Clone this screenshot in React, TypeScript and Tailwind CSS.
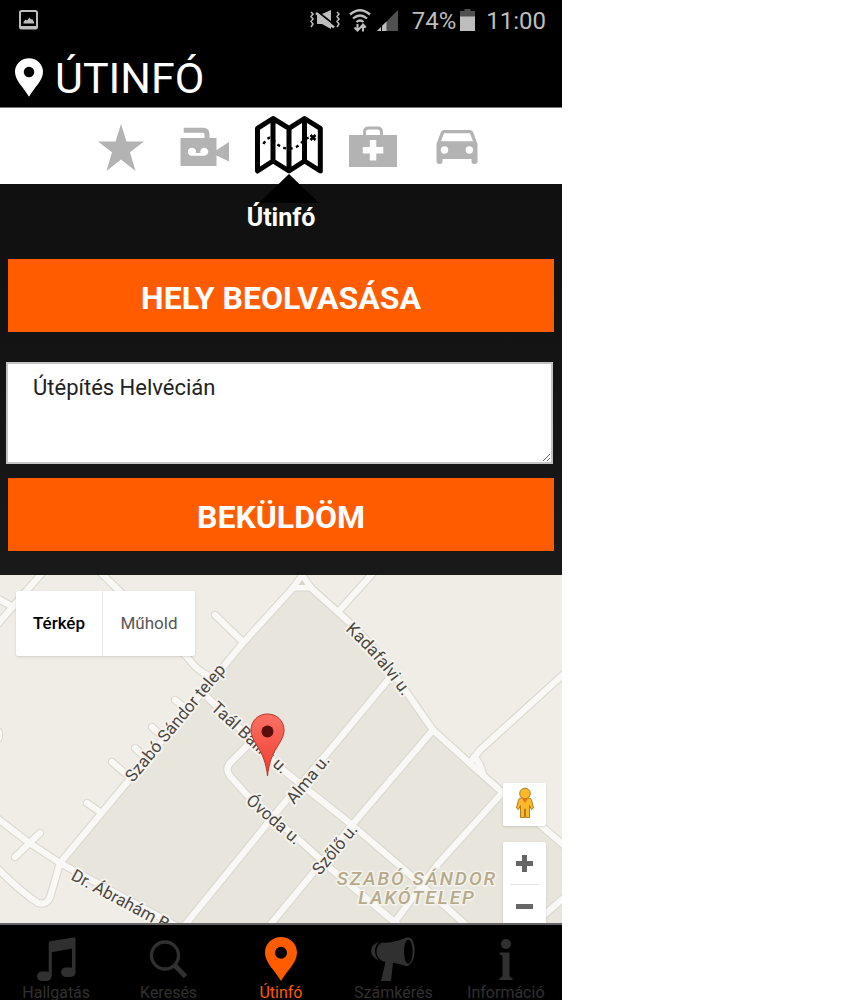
import React, { useState } from 'react';

const gray = '#b3b3b3';

function StarIcon() {
  return (
    <svg width="46" height="47" viewBox="0 0 46 47" aria-hidden="true">
      <path fill={gray} d="M23 0l5.500 17.500H46L32 28.300 37.500 47 23 35.600 8.500 47 14 28.300 0 17.500h17.500z" />
    </svg>
  );
}

function CameraIcon() {
  return (
    <svg width="50" height="40" viewBox="0 0 50 40" aria-hidden="true">
      <path fill="none" stroke={gray} strokeWidth="5" d="M3.700 3.200H23q4 0 4 4V12" />
      <path fill={gray} d="M.500 11h36v12L49 15v19.500L36.500 28.500V39h-36z" />
      <path fill="#fff" d="M12 20.700a4 4 0 0 1 3.800 5.300h4.700a4 4 0 1 1 3.800 2.700H12a4 4 0 0 1 0-8z" />
    </svg>
  );
}

function FoldedMapIcon() {
  return (
    <svg width="68" height="60" viewBox="0 0 68 60" aria-hidden="true" fill="none" stroke="#000">
      <path strokeWidth="5" strokeLinejoin="round" d="M2.500 13.300 18 3.500l16 9.800 15.500-9.800 15.800 9.800V56L49.500 46 34 56 18 46 2.500 56zM18 3.500V46M34 13.300V56M49.500 3.500V46" />
      <path strokeWidth="2.400" strokeDasharray="3 3.500" d="M8.500 29c2-4 5-7 7.500-6s4 5 8 7.500c6 4 13 4 18 1s6-7 12-9" />
      <path strokeWidth="2.600" d="M55.500 20l5 5M60.500 20l-5 5" />
    </svg>
  );
}

function MedkitIcon() {
  return (
    <svg width="48" height="42" viewBox="0 0 48 42" aria-hidden="true">
      <path fill="none" stroke={gray} strokeWidth="3" d="M15.500 10V6q0-4 4-4h9q4 0 4 4v4" />
      <path fill={gray} d="M0 9h48v32H0z" />
      <path fill="#fff" d="M20.800 14h6.500v7h7v6.500h-7v7h-6.500v-7h-7V21h7z" />
    </svg>
  );
}

function CarIcon() {
  return (
    <svg width="42" height="36" viewBox="0 0 42 36" aria-hidden="true">
      <path fill={gray} fillRule="evenodd" d="M8 1h26q2.500 0 3.300 2.500L41.500 15v17.500q0 2.500-3 2.500t-3-2.500V30h-29v2.500q0 2.500-3 2.500t-3-2.500V15L4.700 3.500Q5.500 1 8 1zM8 4.300 5 12.300h32l-3-8z" />
      <circle cx="8.500" cy="21" r="3.700" fill="#fff" />
      <circle cx="33.300" cy="21" r="3.700" fill="#fff" />
    </svg>
  );
}

function PinIcon({ className }: { className: string }) {
  return (
    <svg className={className} viewBox="0 0 32 44" aria-hidden="true">
      <path fill="currentColor" fillRule="evenodd" d="M16 0C7 0 0 7 0 15.500 0 25.500 9.500 33 16 44c6.500-11 16-18.500 16-28.500C32 7 25 0 16 0zm0 9.800a6 6 0 1 1 0 12 6 6 0 0 1 0-12z" />
    </svg>
  );
}

function MusicIcon() {
  return (
    <svg width="39" height="44" viewBox="0 0 39 44" aria-hidden="true" fill="currentColor">
      <path d="M11.700 6q0-1.500 1.500-1.800L36.500.500q2-.3 2 1.500V35.500H35V11.500l-20.200 3.700V39h-3.100z" />
      <rect x="0" y="34.500" width="14.500" height="9.500" rx="4.700" />
      <rect x="24" y="30.500" width="14.500" height="9.500" rx="4.700" />
    </svg>
  );
}

function SearchIcon() {
  return (
    <svg width="39" height="44" viewBox="0 0 39 44" aria-hidden="true" fill="none" stroke="currentColor">
      <circle cx="16" cy="18.500" r="13.500" strokeWidth="3.300" />
      <path strokeWidth="4.800" d="M25.500 28 36.500 39.500" />
    </svg>
  );
}

function MegaphoneIcon() {
  return (
    <svg width="44" height="44" viewBox="0 0 44 44" aria-hidden="true" fill="currentColor">
      <path d="M8 4.500Q0 8 0 14t8 9.500Q4 19 4 14T8 4.500z" />
      <path d="M11 5.500C20 6.500 29 3 35 .800q7-2 8.500 9c1 9-2 18-7.500 19.500-4-.5-8-3-14-3.500L20 44H10l4.500-19-3.500-1q-5.500-3.500-5.500-9.500T11 5.500z" />
      <ellipse cx="37.300" cy="14.800" rx="4.300" ry="12" fill="#000" />
    </svg>
  );
}

function InfoIcon() {
  return (
    <svg width="14" height="44" viewBox="0 0 14 44" aria-hidden="true" fill="currentColor">
      <circle cx="7" cy="7" r="5" />
      <path d="M.500 15.500H10.500V38q0 2.500 3 3v2H.500v-2q3-.5 3-3V20q0-2.500-3-2.500z" />
    </svg>
  );
}

function StatusBar() {
  return (
    <div className="flex h-10 items-center pl-[19px] pr-4 text-[#bdbdbd]">
      <svg width="19" height="20" viewBox="0 0 19 20" aria-hidden="true">
        <rect x="1" y="1" width="17" height="17.500" rx="1.500" fill="none" stroke="currentColor" strokeWidth="2" />
        <path fill="currentColor" d="M1 16h17v3H1zM4.500 13.500V12l2-2.500 1.500 1 2.500-3 1.500 2 1.200-.5 1.800 3v1.500z" />
      </svg>
      <div className="ml-auto flex items-center">
        <svg className="mr-2" width="32" height="22" viewBox="0 0 32 22" aria-hidden="true">
          <path fill="none" stroke="currentColor" strokeWidth="1.500" d="m2 3 2 2-2 2.500 2 2.500-2 2.500L4 15l-2 3M28 3l2 2-2 2.500 2 2.500-2 2.500 2 2.500-2 3" />
          <path fill="currentColor" d="M8 5h5L22 1v19l-9-5H8z" />
          <path stroke="#000" strokeWidth="1.800" d="m9 3 18 14" />
          <path stroke="currentColor" strokeWidth="2.600" d="m7 4 18 14.500" />
        </svg>
        <svg className="mr-[6px]" width="22" height="23" viewBox="0 0 22 23" aria-hidden="true" fill="none" stroke="currentColor">
          <path strokeWidth="2.300" d="M1 5.500Q11-3 21 5.500M4 9.500q7-6 14 0M7.500 13q3.500-3 7 0" />
          <path strokeWidth="2" d="M8.500 15v6.500M5.500 18.500l3 3 3-3M14 22.500V16M11.500 18.500l2.500-3 2.800 3" />
        </svg>
        <svg className="mr-[14px]" width="21" height="21" viewBox="0 0 21 21" aria-hidden="true">
          <path fill="#505050" d="M21 0v21H0z" />
          <path fill="currentColor" d="M9.500 11.500V21H0z" />
          <path stroke="#000" d="M4.500 14v7" />
        </svg>
        <span className="pt-0.5 text-[24px] leading-8">74%</span>
        <svg className="ml-1 mr-[11px]" width="15" height="22" viewBox="0 0 15 22" aria-hidden="true">
          <path fill="#505050" d="M4.500 0h6v2H15v6H0V2h4.500z" />
          <path fill="currentColor" d="M0 7.500h15V22H0z" />
        </svg>
        <span className="pt-0.5 text-[24px] leading-8">11:00</span>
      </div>
    </div>
  );
}

const roads = [
  'M302 576 293 588 243 643 60 863',
  'M303 576 311 588 338 612 Q378 648 403 687 L433 730 475 768 502 792 566 847',
  'M293 587.500H311',
  'M338 612 373 573',
  'M566 672 480 750 470 763M474 757Q480 762 483 774',
  'M388 680 330 750 280 808 185 925',
  'M433 730 352 825 313 873 270 925',
  'M502 793 437 865 394 923',
  'M101 573 187 657Q198 672 211 677M203 693 283 770 352 825 407 872 467 926',
  'M256 737 230 763Q225 769 230 776L247 795 297 838 330 868 398 925',
  'M-3 818 28 842 60 863 180 928',
  'M40 833 15 857',
  'M60 863 51 894Q48 906 38 903Q22 893-3 868',
  'M87 803 100 812M112 762 126 774M135 748 147 759M152 727 165 739M175 700 189 711M215 615 243 642',
  'M42 573-3 625M-3 598 13 607M-2 731Q0 735-2 739',
  'M544 915 566 896',
];

const streetLabels = [
  { id: 'szabo', d: 'M133 783 223 674 260 630', text: 'Szabó Sándor telep' },
  { id: 'kadafalvi', d: 'M345 630 Q374 656 401 694 L420 722', text: 'Kadafalvi u.' },
  { id: 'taal', d: 'M210 709 300 791', text: 'Taál Bálint u.' },
  { id: 'ovoda', d: 'M245 802 320 867', text: 'Óvoda u.' },
  { id: 'alma', d: 'M294 805 350 737', text: 'Alma u.' },
  { id: 'szolo', d: 'M320 876 380 804', text: 'Szőlő u.' },
  { id: 'abraham', d: 'M70 879 230 965', text: 'Dr. Ábrahám B. u.' },
];

function StreetMap() {
  const lines = roads.map((d) => <path key={d} d={d} />);
  return (
    <svg className="absolute inset-0 h-full w-full" viewBox="0 575 562 348" preserveAspectRatio="xMidYMin slice" role="img" aria-label="Térkép">
      <path fill="#f0ede6" d="M-100 475h762v548h-762z" />
      <path fill="#e8e5dc" d="M302 582 338 612Q378 648 403 687L433 730 502 793 566 847V1000H330L60 863 243 643z" />
      <g fill="none" strokeLinecap="round" strokeLinejoin="round">
        <g stroke="#dcd9d0" strokeWidth="8.500">{lines}</g>
        <g stroke="#f9f8f5" strokeWidth="6.200">{lines}</g>
      </g>
      <path fill="#d8d4ca" d="m302 580 3.500 5h-7z" />
      <g className="font-['Roboto',sans-serif] text-[17px]" fill="#4c463e" stroke="#f5f3ee" strokeWidth="4" strokeLinejoin="round" paintOrder="stroke">
        {streetLabels.map((l) => (
          <React.Fragment key={l.id}>
            <path id={l.id} d={l.d} fill="none" stroke="none" />
            <text><textPath href={`#${l.id}`}>{l.text}</textPath></text>
          </React.Fragment>
        ))}
      </g>
      <g className="font-['Roboto',sans-serif] text-[19px] font-medium italic tracking-[2px]" fill="#b5aa8b" stroke="#f5f3ee" strokeWidth="3" paintOrder="stroke" textAnchor="middle">
        <text x="417" y="885">SZABÓ SÁNDOR</text>
        <text x="417" y="904">LAKÓTELEP</text>
      </g>
      <defs>
        <linearGradient id="marker" x1="0" x2="0" y1="0" y2="1">
          <stop offset="0" stopColor="#fb7064" />
          <stop offset="1" stopColor="#ef3c30" />
        </linearGradient>
      </defs>
      <path fill="url(#marker)" stroke="#b8342c" d="M267.500 714c-9.500 0-16.500 7-16.500 16 0 13 14 19 16.500 46 2.500-27 16.500-33 16.500-46 0-9-7-16-16.500-16z" />
      <circle cx="267.500" cy="731.500" r="6" fill="#590e0b" />
    </svg>
  );
}

function PegmanIcon() {
  return (
    <svg width="18" height="32" viewBox="0 0 18 32" aria-hidden="true" fill="#fbb829" stroke="#b27d1d" strokeWidth="1">
      <path d="M5 11h8q2 0 2.500 2L17.500 21l-2 1.500-2-4V30.500h-4V22h-1v8.500h-4v-12l-2 4-2-1.500L2.500 13Q3 11 5 11z" />
      <circle cx="9" cy="6.500" r="5.300" />
      <path fill="#e5751f" stroke="none" d="M6 11.500h6L9 16z" />
    </svg>
  );
}

const tabs = [
  { name: 'Kedvencek', icon: <StarIcon /> },
  { name: 'Traffipax', icon: <CameraIcon /> },
  { name: 'Útinfó', icon: <FoldedMapIcon />, active: true },
  { name: 'Elsősegély', icon: <MedkitIcon /> },
  { name: 'Autó', icon: <CarIcon /> },
];

const navItems = [
  { name: 'Hallgatás', icon: <MusicIcon /> },
  { name: 'Keresés', icon: <SearchIcon /> },
  { name: 'Útinfó', icon: <PinIcon className="h-11 w-8" />, active: true },
  { name: 'Számkérés', icon: <MegaphoneIcon /> },
  { name: 'Információ', icon: <InfoIcon /> },
];

const orangeButton = 'mx-2 h-[73px] bg-[#ff5c00] pt-1 text-[32px] font-bold leading-10 text-white';

export default function App() {
  const [note, setNote] = useState('Útépítés Helvécián');
  return (
    <div className="min-h-screen bg-white font-['Roboto',sans-serif]">
      <div className="flex min-h-screen w-full max-w-[562px] flex-col bg-black">
        <header className="h-[107px] text-white">
          <StatusBar />
          <h1 className="flex items-center gap-3 pl-[15px] pt-2 text-[43px] leading-[56px]">
            <PinIcon className="h-[39px] w-7" />
            <span className="pt-0.5">ÚTINFÓ</span>
          </h1>
        </header>

        <nav className="flex h-[77px] justify-center border-t border-[#777] bg-white pl-4" aria-label="Témák">
          {tabs.map((t) => (
            <button key={t.name} type="button" aria-label={t.name} className="relative flex w-[84px] items-center justify-center pt-0.5">
              <span className={t.active ? '-mt-1' : ''}>{t.icon}</span>
              {t.active && (
                <svg className="absolute left-3 top-[66px] h-[29px] w-[60px]" viewBox="0 0 60 29" aria-hidden="true">
                  <path d="M30 0 60 29H0z" />
                </svg>
              )}
            </button>
          ))}
        </nav>

        <main className="flex flex-1 flex-col">
          <form className="flex flex-col bg-linear-to-b from-[#101010] to-[#191919] pb-6" onSubmit={(e) => e.preventDefault()}>
            <h2 className="relative pb-[26px] pt-[19px] text-center text-[25px] font-bold leading-[30px] text-white">Útinfó</h2>
            <button type="button" className={orangeButton}>HELY BEOLVASÁSA</button>
            <textarea
              aria-label="Leírás"
              value={note}
              onChange={(e) => setNote(e.target.value)}
              className="mb-[14px] ml-1.5 mr-[9px] mt-[30px] h-[102px] resize border-2 border-[#c4c4c4] bg-white px-[25px] py-[10px] text-[22px] leading-7 text-[#222]"
            />
            <button type="submit" className={orangeButton}>BEKÜLDÖM</button>
          </form>

          <section className="relative min-h-[340px] flex-1 overflow-hidden" aria-label="Térkép nézet">
            <StreetMap />
            <div className="absolute left-4 top-4 flex h-[65px] rounded-xs bg-white text-[17px] shadow">
              <button type="button" className="w-[87px] border-r border-[#e8e8e8] font-medium text-black">Térkép</button>
              <button type="button" className="w-[92px] text-[#565656]">Műhold</button>
            </div>
            <div className="absolute right-4 top-[208px] flex w-[43px] flex-col gap-4">
              <button type="button" aria-label="Utcakép" className="flex h-[43px] items-center justify-center rounded-xs bg-white pb-[3px] shadow">
                <PegmanIcon />
              </button>
              <div className="flex flex-col rounded-xs bg-white px-[7px] shadow">
                <button type="button" aria-label="Nagyítás" className="flex h-[43px] items-center justify-center border-b border-[#e2e2e2]">
                  <svg width="17" height="17" viewBox="0 0 17 17" aria-hidden="true"><path fill="#666" d="M6 0h5v6h6v5h-6v6H6v-6H0V6h6z" /></svg>
                </button>
                <button type="button" aria-label="Kicsinyítés" className="flex h-[43px] items-center justify-center">
                  <svg width="17" height="5" viewBox="0 0 17 5" aria-hidden="true"><path fill="#666" d="M0 0h17v5H0z" /></svg>
                </button>
              </div>
            </div>
          </section>
        </main>

        <nav className="grid h-[77px] grid-cols-5 border-t-2 border-[#666] pt-3" aria-label="Főmenü">
          {navItems.map((n) => (
            <a key={n.name} href="#" className={`flex flex-col items-center text-[16px] leading-[18px] ${n.active ? 'text-[#ff5c00]' : 'text-[#303030]'}`}>
              {n.icon}
              <span className="h-[18px] pt-[3px] leading-[18px]">{n.name}</span>
            </a>
          ))}
        </nav>
      </div>
    </div>
  );
}
